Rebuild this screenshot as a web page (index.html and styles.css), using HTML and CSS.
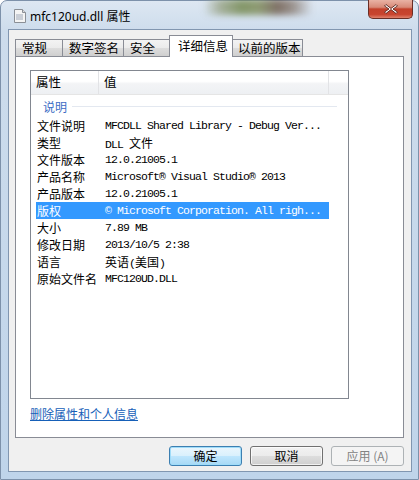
FILE: index.html
```html
<!DOCTYPE html>
<html lang="zh-CN">
<head>
    <meta charset="UTF-8">
    <title>mfc120ud.dll 属性</title>
    <link rel="stylesheet" href="styles.css">
</head>
<body>
    <div class="window">
        <div class="titlebar">
            <svg class="file-icon" width="16" height="16" viewBox="0 0 16 16">
                <path d="M2.5 1.5h8l3 3v10h-11z" fill="#f4f4f4" stroke="#8a8f96"/>
                <path d="M10.5 1.5v3h3" fill="#dcdcdc" stroke="#8a8f96"/>
                <rect x="4" y="6" width="7" height="6" fill="#c9ced6"/>
            </svg>
            <span class="title">mfc120ud.dll 属性</span>
            <div class="close">
                <svg width="16" height="12" viewBox="0 0 16 12">
                    <path d="M3 1.5l5 4 5-4 1.5 1.5-4.5 3 4.5 3-1.5 1.5-5-4-5 4-1.5-1.5 4.5-3-4.5-3z" fill="#fff" stroke="#5a241c" stroke-width="0.9"/>
                </svg>
            </div>
        </div>

        <div class="client">
            <div class="tabs">
                <div class="tab tab-general">常规</div>
                <div class="tab tab-sign">数字签名</div>
                <div class="tab tab-security">安全</div>
                <div class="tab tab-details active">详细信息</div>
                <div class="tab tab-versions">以前的版本</div>
            </div>

            <div class="panel">
                <div class="list">
                    <div class="list-header">
                        <div class="hcol hcol-name">属性</div>
                        <div class="hcol hcol-value">值</div>
                        <div class="hcol hcol-fill"></div>
                    </div>
                    <div class="group">
                        <span class="group-label">说明</span>
                        <span class="group-line"></span>
                    </div>
                    <div class="row">
                        <div class="name">文件说明</div>
                        <div class="value">MFCDLL Shared Library - Debug Ver...</div>
                    </div>
                    <div class="row">
                        <div class="name">类型</div>
                        <div class="value">DLL <span class="cjk">文件</span></div>
                    </div>
                    <div class="row">
                        <div class="name">文件版本</div>
                        <div class="value">12.0.21005.1</div>
                    </div>
                    <div class="row">
                        <div class="name">产品名称</div>
                        <div class="value">Microsoft® Visual Studio® 2013</div>
                    </div>
                    <div class="row">
                        <div class="name">产品版本</div>
                        <div class="value">12.0.21005.1</div>
                    </div>
                    <div class="row selected">
                        <div class="name">版权</div>
                        <div class="value">© Microsoft Corporation. All righ...</div>
                    </div>
                    <div class="row">
                        <div class="name">大小</div>
                        <div class="value">7.89 MB</div>
                    </div>
                    <div class="row">
                        <div class="name">修改日期</div>
                        <div class="value">2013/10/5 2:38</div>
                    </div>
                    <div class="row">
                        <div class="name">语言</div>
                        <div class="value"><span class="cjk">英语</span>(<span class="cjk">美国</span>)</div>
                    </div>
                    <div class="row">
                        <div class="name">原始文件名</div>
                        <div class="value">MFC120UD.DLL</div>
                    </div>
                </div>
                <a class="remove-link" href="#">删除属性和个人信息</a>
            </div>

            <div class="buttons">
                <button class="btn default">确定</button>
                <button class="btn">取消</button>
                <button class="btn" disabled>应用 (A)</button>
            </div>
        </div>
    </div>
</body>
</html>
```

FILE: styles.css
```css
body {
    margin: 0;
    width: 419px;
    height: 480px;
    overflow: hidden;
    font-family: "Noto Sans CJK SC", "Noto Sans", sans-serif;
    font-size: 12px;
    color: #000;
}

/* Aero window frame */
.window {
    width: 419px;
    height: 480px;
    box-sizing: border-box;
    padding: 0 6px 7px 7px;
    display: flex;
    flex-direction: column;
    border-radius: 7px 7px 0 0;
    border: 1px solid #7d91aa;
    background: linear-gradient(180deg, #dde7f2 0%, #cddcec 30px, #bfd4ea 100%);
}

.titlebar {
    height: 28px;
    display: flex;
    align-items: center;
    position: relative;
}
/* blurred desktop showing through the glass */
.titlebar::before {
    content: "";
    position: absolute;
    left: 195px;
    top: -2px;
    width: 110px;
    height: 16px;
    background: linear-gradient(90deg, rgba(150, 160, 140, 0) 0%, #9aa58a 15%, #6f8448 35%, #7c8a55 50%, #6a5646 68%, #8c8078 82%, rgba(170, 178, 188, 0) 100%);
    filter: blur(3px);
    opacity: 0.8;
}
.file-icon {
    margin-left: 4px;
    margin-top: 2px;
    position: relative;
}
.title {
    margin-left: 2px;
    margin-top: 1px;
    font-family: "Noto Sans", "Noto Sans CJK SC", sans-serif;
    font-size: 12px;
    color: #000;
    position: relative;
}
.close {
    position: absolute;
    top: -1px;
    right: -1px;
    width: 45px;
    height: 19px;
    box-sizing: border-box;
    border: 1px solid #6a2e25;
    border-top: none;
    border-radius: 0 0 5px 5px;
    background: linear-gradient(180deg, #e9b2a4 0%, #d88a78 40%, #c3412b 50%, #c8442e 80%, #e0806a 100%);
    display: flex;
    align-items: center;
    justify-content: center;
}

/* Client area */
.client {
    flex: 1;
    background: #f0f0f0;
    border: 1px solid #8196b0;
    display: flex;
    flex-direction: column;
}

.tabs {
    display: flex;
    align-items: flex-end;
    height: 21px;
    margin-top: 5px;
    padding-left: 6px;
}
.tab {
    height: 17px;
    box-sizing: border-box;
    border: 1px solid #898c95;
    border-bottom: none;
    padding-left: 6px;
    line-height: 16px;
    font-size: 12.5px;
    white-space: nowrap;
    overflow: hidden;
    background: linear-gradient(180deg, #f3f3f3 0%, #ebebeb 50%, #dddddd 51%, #cfcfcf 100%);
    margin-left: -1px;
}
.tab-general { width: 48px; margin-left: 0; }
.tab-sign { width: 62px; }
.tab-security { width: 47px; }
.tab-details { width: 64px; }
.tab-versions { width: 71px; padding-left: 5px; }
.tab.active {
    height: 22px;
    margin-bottom: -1px;
    padding-left: 8px;
    line-height: 20px;
    background: #fff;
    position: relative;
    z-index: 1;
}

.panel {
    height: 382px;
    box-sizing: border-box;
    margin: 0 7px 0 6px;
    border: 1px solid #898c95;
    background: #fff;
    padding: 13px 14px;
}

/* List view */
.list {
    width: 319px;
    height: 329px;
    box-sizing: border-box;
    border: 1px solid #828790;
}
.list-header {
    display: flex;
    height: 24px;
    box-sizing: border-box;
    border-bottom: 1px solid #e5e5e5;
    background: linear-gradient(180deg, #ffffff 0%, #ffffff 45%, #f3f4f6 55%, #eef0f3 100%);
}
.hcol {
    line-height: 22px;
    font-size: 12.5px;
    border-right: 1px solid #e2e3e6;
}
.hcol-name { width: 62px; padding-left: 5px; }
.hcol-value { width: 224px; padding-left: 5px; }
.hcol-fill { flex: 1; border-right: none; }

.group {
    height: 22px;
    display: flex;
    align-items: center;
    padding-left: 12px;
    padding-right: 11px;
}
.group-label {
    color: #3b6cc4;
    font-size: 12px;
}
.group-line {
    flex: 1;
    height: 1px;
    margin-left: 5px;
    background: #e3e8f0;
}

.row {
    display: flex;
    height: 17px;
    width: 293px;
    margin-left: 5px;
    align-items: center;
}
.row .name {
    width: 62px;
    padding-left: 1px;
    font-size: 12px;
}
.row .value {
    padding-left: 6px;
    font-family: "Liberation Mono", "Noto Sans CJK SC", monospace;
    font-size: 11.5px;
    letter-spacing: -0.9px;
    white-space: nowrap;
}
.value .cjk {
    font-family: "Noto Sans CJK SC", sans-serif;
    font-size: 12px;
    letter-spacing: 0;
}
.row.selected {
    background: #3399ff;
    color: #fff;
}

.remove-link {
    display: inline-block;
    margin-top: 8px;
    color: #1660b8;
    font-size: 12px;
    line-height: 14px;
    text-decoration: underline;
}

/* Dialog buttons */
.buttons {
    display: flex;
    justify-content: flex-end;
    gap: 8px;
    margin-top: 8px;
    padding-right: 7px;
}
.btn {
    width: 73px;
    height: 20px;
    padding: 0;
    font-family: "Noto Sans CJK SC", sans-serif;
    font-size: 12px;
    line-height: 16px;
    color: #000;
    border: 1px solid #707070;
    border-radius: 3px;
    background: linear-gradient(180deg, #f2f2f2 0%, #ebebeb 50%, #dddddd 51%, #cfcfcf 100%);
    box-shadow: inset 0 0 0 1px rgba(255, 255, 255, 0.7);
}
.btn.default {
    border-color: #3c7fb1;
    box-shadow: inset 0 0 0 1px #9fdcf9;
    background: linear-gradient(180deg, #eaf6fd 0%, #d9f0fc 50%, #bee6fd 51%, #a7d9f5 100%);
}
.btn:disabled {
    border-color: #adb2b5;
    background: #f4f4f4;
    color: #838383;
    box-shadow: none;
}
```
